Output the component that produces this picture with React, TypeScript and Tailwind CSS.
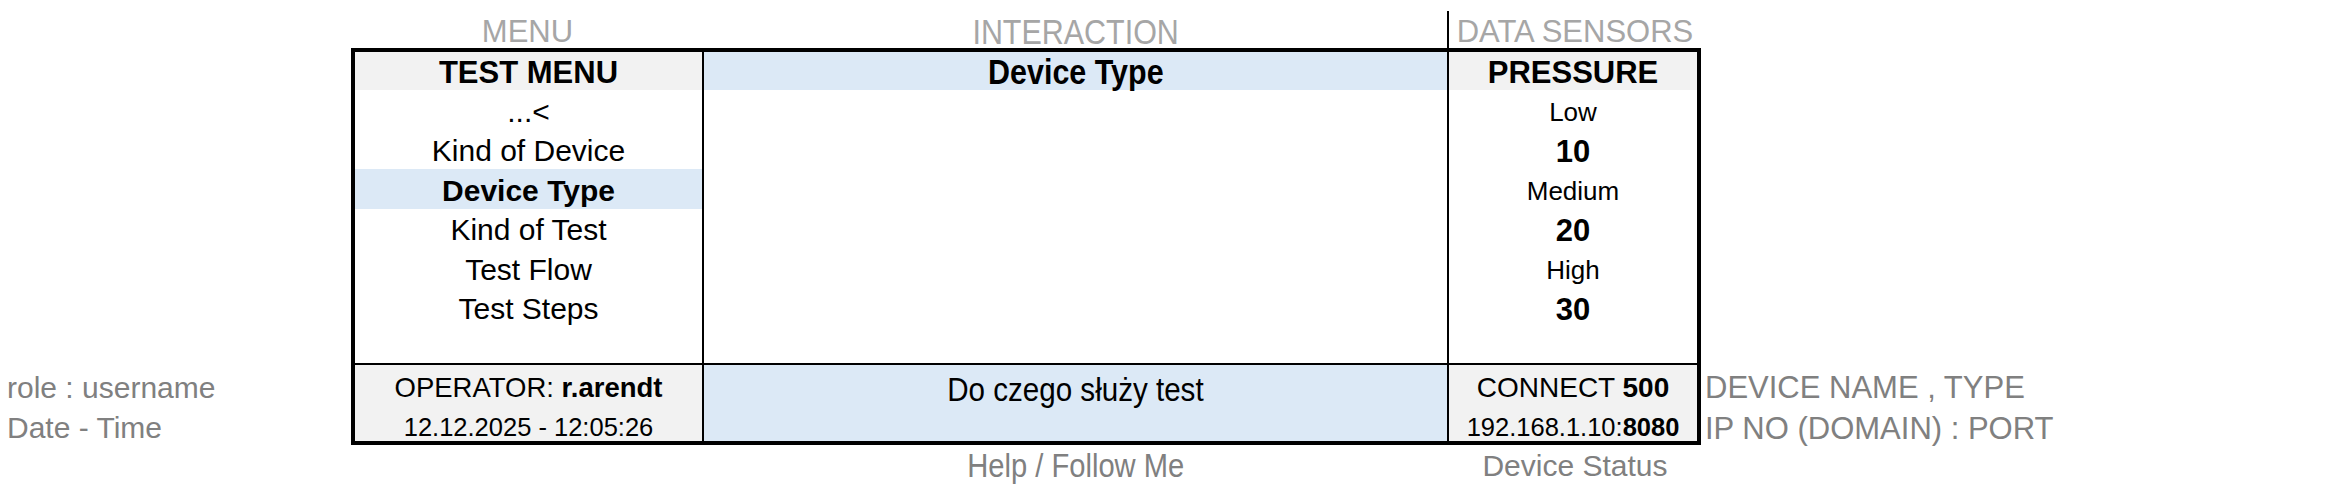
import React from "react";

// the middle column is set in a slightly condensed face
const N = "inline-block scale-x-[0.87] whitespace-nowrap";

const menu = ["...<", "Kind of Device", "Device Type", "Kind of Test", "Test Flow", "Test Steps"];
const active = "Device Type";

const sensors = [
  { t: "Low", b: false },
  { t: "10", b: true },
  { t: "Medium", b: false },
  { t: "20", b: true },
  { t: "High", b: false },
  { t: "30", b: true },
];

export default function App() {
  return (
    <div className="w-[2339px] h-[496px] bg-white pt-[11px] font-['Liberation_Sans',Arial,sans-serif] text-black leading-none whitespace-nowrap">
      <div className="grid grid-cols-[351px_1350px_1fr]">
        {/* labels above the panel */}
        <div />
        <div className="grid grid-cols-[353px_743px_254px] h-[37px] text-[#a6a6a6]">
          <div className="flex items-center justify-center pt-[3px] text-[31px]">MENU</div>
          <div className="flex items-center justify-center pt-[3px] text-[35px]">
            <span className={N}>INTERACTION</span>
          </div>
          <div className="flex items-center justify-center pt-[3px] border-l-2 border-black text-[31px]">
            DATA SENSORS
          </div>
        </div>
        <div />

        {/* left hints */}
        <div className="flex flex-col justify-end pb-[4px] text-[30px] text-[#808080]">
          <div className="h-[38px] flex items-center pl-[7px] pt-[7px]">role : username</div>
          <div className="h-[38px] flex items-center pl-[7px] pt-[12px]">Date - Time</div>
        </div>

        {/* panel */}
        <div className="border-4 border-black flex flex-col">
          <div className="grid grid-cols-[347px_745px_250px] h-[313px] border-b-2 border-black">
            <div className="flex flex-col">
              <div className="h-[38px] shrink-0 bg-[#f2f2f2] flex items-center justify-center pt-[2px] text-[31px] font-bold">
                TEST MENU
              </div>
              {menu.map((m) => (
                <div
                  key={m}
                  className={`h-[39.5px] shrink-0 flex items-center justify-center pt-[4px] text-[30px] ${
                    m === active ? "bg-[#dce9f6] font-bold" : ""
                  }`}
                >
                  {m}
                </div>
              ))}
            </div>

            <div className="border-l-2 border-black flex flex-col">
              <div className="h-[38px] shrink-0 bg-[#dce9f6] flex items-center justify-center pt-[1px] text-[35px] font-bold">
                <span className={N}>Device Type</span>
              </div>
            </div>

            <div className="border-l-2 border-black flex flex-col">
              <div className="h-[38px] shrink-0 bg-[#f2f2f2] flex items-center justify-center pt-[2px] text-[31px] font-bold">
                PRESSURE
              </div>
              {sensors.map((s, i) => (
                <div
                  key={i}
                  className={`h-[39.5px] shrink-0 flex items-center justify-center pt-[4px] ${
                    s.b ? "text-[31px] font-bold" : "text-[26px]"
                  }`}
                >
                  {s.t}
                </div>
              ))}
            </div>
          </div>

          <div className="grid grid-cols-[347px_745px_250px] h-[76px]">
            <div className="bg-[#f2f2f2] flex flex-col">
              <div className="h-[38px] flex items-center justify-center pt-[8px] text-[27.5px]">
                <span>
                  OPERATOR: <b>r.arendt</b>
                </span>
              </div>
              <div className="h-[38px] flex items-center justify-center pt-[12px] text-[25.5px]">
                12.12.2025 - 12:05:26
              </div>
            </div>
            <div className="border-l-2 border-black bg-[#dce9f6] flex justify-center pt-[7px] text-[34px]">
              <span className={N}>Do czego służy test</span>
            </div>
            <div className="border-l-2 border-black bg-[#f2f2f2] flex flex-col">
              <div className="h-[38px] flex items-center justify-center pt-[8px] text-[28px]">
                <span>
                  CONNECT <b>500</b>
                </span>
              </div>
              <div className="h-[38px] flex items-center justify-center pt-[12px] text-[25.5px]">
                <span>
                  192.168.1.10:<b>8080</b>
                </span>
              </div>
            </div>
          </div>
        </div>

        {/* right hints */}
        <div className="flex flex-col justify-end pb-[4px] text-[31px] text-[#808080]">
          <div className="h-[38px] flex items-center pl-[4px] pt-[7px]">DEVICE NAME , TYPE</div>
          <div className="h-[38px] flex items-center pl-[4px] pt-[12px]">IP NO (DOMAIN) : PORT</div>
        </div>

        {/* labels below the panel */}
        <div />
        <div className="grid grid-cols-[353px_743px_254px] h-[40px] text-[#808080]">
          <div />
          <div className="flex items-center justify-center pt-[2px] text-[33.5px]">
            <span className={N}>Help / Follow Me</span>
          </div>
          <div className="flex items-center justify-center pl-[2px] pt-[2px] text-[30px]">Device Status</div>
        </div>
        <div />
      </div>
    </div>
  );
}
